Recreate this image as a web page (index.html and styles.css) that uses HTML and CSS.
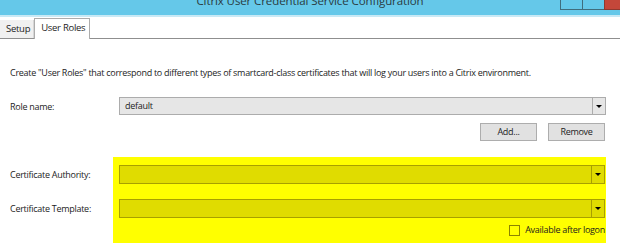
FILE: index.html
```html
<!DOCTYPE html>
<html>
<head>
<meta charset="UTF-8">
<title>Citrix User Credential Service Configuration</title>
<link rel="stylesheet" href="styles.css">
</head>
<body>
  <div class="window">
    <div class="titlebar">
      <span class="title">Citrix User Credential Service Configuration</span>
      <div class="winbtns">
        <span class="wb"></span>
        <span class="wb"></span>
        <span class="wb close"></span>
      </div>
    </div>
    <div class="tabs">
      <span class="tab">Setup</span>
      <span class="tab active">User Roles</span>
    </div>
    <div class="panel">
      <p class="intro">Create "User Roles" that correspond to different types of smartcard-class certificates that will log your users into a Citrix environment.</p>
      <div class="row">
        <span class="label">Role name:</span>
        <div class="combo">
          <span class="value">default</span>
          <span class="drop"><span class="arrow"></span></span>
        </div>
      </div>
      <div class="btnrow">
        <span class="btn">Add...</span>
        <span class="btn">Remove</span>
      </div>
      <div class="certs">
        <div class="labels">
          <span class="label">Certificate Authority:</span>
          <span class="label">Certificate Template:</span>
        </div>
        <div class="marked">
          <div class="combo yellow">
            <span class="value"></span>
            <span class="drop"><span class="arrow"></span></span>
          </div>
          <div class="combo yellow">
            <span class="value"></span>
            <span class="drop"><span class="arrow"></span></span>
          </div>
          <div class="check">
            <span class="box"></span>
            <span>Available after logon</span>
          </div>
        </div>
      </div>
    </div>
  </div>
</body>
</html>
```

FILE: styles.css
```css
body {
    margin: 0;
    background: #fff;
    font-family: "Open Sans", "DejaVu Sans", sans-serif;
    font-size: 9px;
    letter-spacing: -0.28px;
    color: #1c1c1c;
}
.window {
    width: 620px;
}
.titlebar {
    height: 15px;
    background: #65c8e9;
    border-bottom: 2px solid #c8e9f5;
    display: flex;
    justify-content: center;
    overflow: hidden;
    position: relative;
}
.title {
    font-size: 11.5px;
    letter-spacing: -0.1px;
    line-height: 15px;
    margin-top: -7px;
    color: #2a3a40;
}
.winbtns {
    position: absolute;
    top: 0;
    right: 0;
    display: flex;
}
.wb {
    width: 21px;
    height: 9px;
    border: 1px solid #3f6d7d;
    border-top: none;
    border-right: none;
    background: #65c8e9;
}
.wb.close {
    width: 15px;
    background: #c4473a;
    border-color: #8e3a30;
}
.tabs {
    margin-top: 2px;
    height: 19px;
    border-bottom: 1px solid #8f8f8f;
    display: flex;
    align-items: flex-end;
}
.tab {
    height: 18px;
    line-height: 18px;
    padding: 0 3px 0 6px;
    background: #f0f0f0;
    border-right: 1px solid #d6d6d6;
    font-size: 9.5px;
}
.tab.active {
    background: #fff;
    border: 1px solid #acacac;
    border-bottom: none;
    padding: 0 4px 0 6px;
    margin-bottom: -1px;
    height: 20px;
}
.panel {
    padding: 0 14px 0 10px;
}
.intro {
    margin: 26px 0 0;
    line-height: 16px;
}
.row {
    display: flex;
    align-items: center;
    margin-top: 16px;
}
.row .label {
    width: 109px;
}
.combo {
    flex: 1;
    height: 16px;
    border: 1px solid #acacac;
    background: #e6e6e6;
    display: flex;
}
.value {
    flex: 1;
    line-height: 16px;
    padding-left: 5px;
}
.drop {
    width: 12px;
    border-left: 1px solid #acacac;
    display: flex;
    align-items: center;
    justify-content: center;
}
.arrow {
    width: 0;
    height: 0;
    border-left: 3px solid transparent;
    border-right: 3px solid transparent;
    border-top: 3px solid #000;
}
.btnrow {
    display: flex;
    justify-content: flex-end;
    gap: 11px;
    margin-top: 8px;
    padding-right: 1px;
}
.btn {
    width: 55px;
    height: 16px;
    line-height: 16px;
    text-align: center;
    background: #e1e1e1;
    border: 1px solid #adadad;
}
.certs {
    display: flex;
    margin-top: 16px;
}
.labels {
    width: 103px;
    display: flex;
    flex-direction: column;
    gap: 15px;
    padding-top: 8px;
}
.labels .label {
    line-height: 19px;
}
.marked {
    flex: 1;
    background: #ffff00;
    padding: 8px 1px 6px 6px;
    display: flex;
    flex-direction: column;
    gap: 15px;
}
.combo.yellow {
    flex: none;
    height: 17px;
    background: #e0dc00;
    border-color: #a8a000;
}
.combo.yellow .drop {
    border-left-color: #a8a000;
}
.check {
    margin-top: -10px;
    display: flex;
    justify-content: flex-end;
    align-items: center;
    gap: 5px;
    line-height: 14px;
}
.box {
    width: 9px;
    height: 9px;
    border: 1px solid #8c8400;
    background: #ffff00;
}
```
